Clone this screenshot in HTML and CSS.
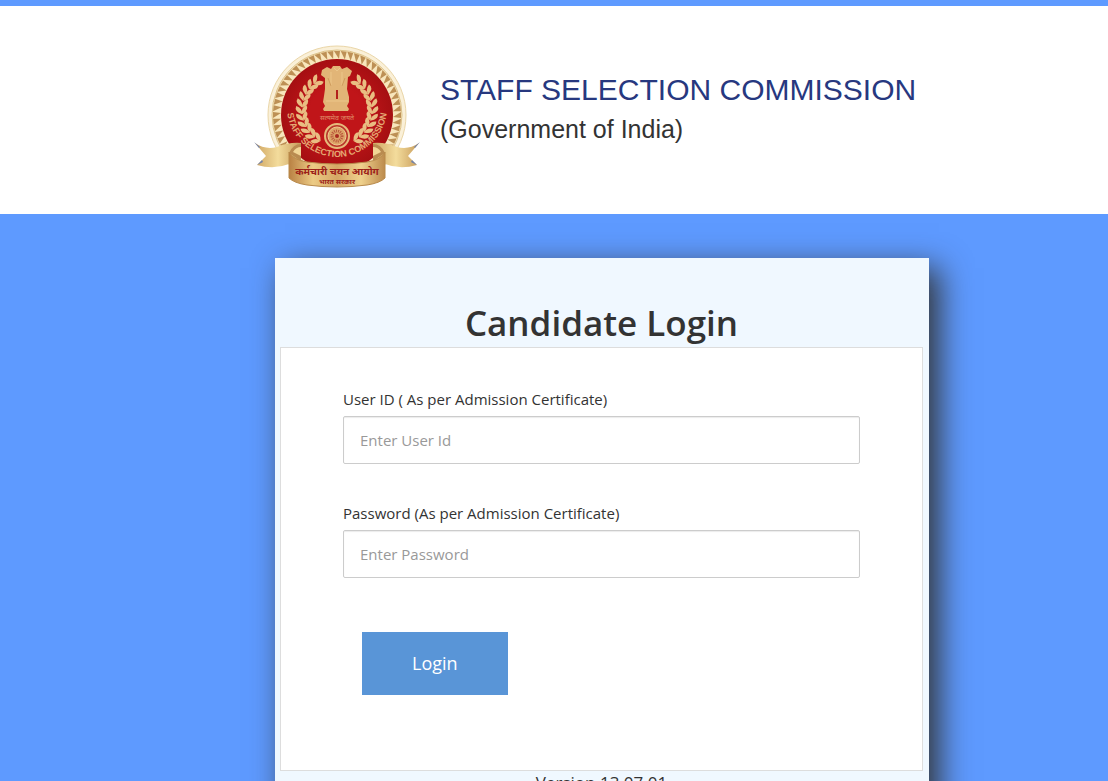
FILE: index.html
```html
<!DOCTYPE html>
<html lang="en">
<head>
  <meta charset="UTF-8" />
  <meta name="viewport" content="width=device-width, initial-scale=1" />
  <title>Staff Selection Commission | Candidate Login</title>
  <link rel="stylesheet" href="styles.css">
</head>
<body>

  <header class="site-header">
    <svg class="emblem" viewBox="0 0 200 170" role="img" aria-label="Staff Selection Commission emblem">
      <defs>
        <linearGradient id="gold" x1="0" x2="1">
          <stop offset="0" stop-color="#b98143" />
          <stop offset="0.25" stop-color="#eccb85" />
          <stop offset="0.5" stop-color="#d5a765" />
          <stop offset="0.75" stop-color="#efd18d" />
          <stop offset="1" stop-color="#bd8b4d" />
        </linearGradient>
        <linearGradient id="tail" x1="0" x2="1">
          <stop offset="0" stop-color="#cfa562" />
          <stop offset="0.5" stop-color="#f3dc9c" />
          <stop offset="1" stop-color="#c89c5a" />
        </linearGradient>
        <radialGradient id="red">
          <stop offset="0.5" stop-color="#c01519" />
          <stop offset="1" stop-color="#a50f12" />
        </radialGradient>
        <path id="motto" d="M47 77 A50 50 0 0 0 147 77" />
      </defs>

      <circle cx="97" cy="85" r="69" fill="#faf0d8" stroke="#ead6a8" />
      <circle cx="97" cy="85" r="65" fill="#f8e6bc" stroke="#dcc28a" />
      <g id="teeth" fill="#bd9055"></g>
      <circle cx="97" cy="85" r="56" fill="url(#red)" />

      <!-- lion capital -->
      <path fill="#e2b577" d="M82 40 l5 -3 4 2 2 -3 7 0 2 3 5 -2 5 4 -2 5 -2 1 -1 12 2 8 0 5 -2 4 2 3 -1 2 -24 0 -1 -2 2 -3 -2 -4 1 -6 1 -7 0 -11 -4 -3z" />
      <path fill="none" stroke="#ecc68a" stroke-width="1" d="M91 42v14M102 42v14M86 71h22M94 38l3 3 3-3" />
      <path fill="none" stroke="#cf9c5c" stroke-width="1" d="M88 48l3 8M105 48l-3 8" />
      <path stroke="#b3211c" stroke-width="2" d="M97 60v9" />
      <text class="emblem-small" x="97" y="90">सत्यमेव जयते</text>

      <g id="laurel" fill="#e9bd82"></g>

      <!-- wheel -->
      <circle cx="97" cy="106" r="12" fill="#b9362a" stroke="#e6ba7c" stroke-width="2" />
      <circle cx="97" cy="106" r="9" fill="#dda568" stroke="#f0cb91" />
      <circle cx="97" cy="106" r="5" fill="none" stroke="#b9563c" stroke-width="3" stroke-dasharray="1 1" />
      <circle cx="97" cy="106" r="2" fill="#a82a20" />

      <text class="emblem-motto"><textPath href="#motto" startOffset="50%" text-anchor="middle">STAFF SELECTION COMMISSION</textPath></text>

      <!-- ribbon -->
      <path fill="url(#tail)" d="M15 113 q10 7 22 4 q12 -5 24 -4 v17 l-12 4 q-15 6 -32 1 l9 -9z" />
      <path fill="url(#tail)" d="M179 113 q-10 7 -22 4 q-12 -5 -24 -4 v17 l12 4 q15 6 32 1 l-9 -9z" />
      <path fill="#b98b50" d="M49 123 q4 -9 12 -9 v17z M145 123 q-4 -9 -12 -9 v17z" />
      <path fill="#f1d595" d="M53 122 q3 -5 8 -5 v9z M141 122 q-3 -5 -8 -5 v9z" />
      <path fill="url(#gold)" stroke="#b88a4b" stroke-width="1" d="M49 122 q4 8 18 10 q30 4 60 0 q14 -2 18 -10 v26 q-5 5 -18 7 q-30 4 -60 0 q-13 -2 -18 -7z" />
      <path fill="#7082ac" d="M14 112l6 5-1 1zM17 135l5-5 1 2zM180 112l-6 5 1 1zM177 135l-5-5-1 2z" />
      <text class="emblem-ribbon" x="97" y="145">कर्मचारी चयन आयोग</text>
      <text class="emblem-ribbon emblem-ribbon-sub" x="97" y="154">भारत सरकार</text>
    </svg>
    <div class="brand">
      <p class="brand-name">STAFF SELECTION COMMISSION</p>
      <p class="brand-sub">(Government of India)</p>
    </div>
  </header>

  <main class="login-card">
    <h1>Candidate Login</h1>
    <form class="login-form">
      <div class="field">
        <label for="userid">User ID ( As per Admission Certificate)</label>
        <input type="text" id="userid" placeholder="Enter User Id" />
      </div>
      <div class="field">
        <label for="password">Password (As per Admission Certificate)</label>
        <input type="password" id="password" placeholder="Enter Password" />
      </div>
      <button type="submit">Login</button>
    </form>
    <p class="version">Version 13.07.01</p>
  </main>

  <script src="emblem.js"></script>
</body>
</html>
```
FILE: styles.css
```css
* {
  box-sizing: border-box;
}
body {
  margin: 0;
  background: #5e9aff;
  color: #333;
  font-family: "Open Sans", sans-serif;
}
p, h1 {
  margin: 0;
}
.site-header {
  display: flex;
  align-items: flex-start;
  border-top: 6px solid #5e9aff;
  padding: 24px 0 14px 240px;
  background: #fff;
}
.emblem {
  flex: none;
  width: 200px;
  height: 170px;
}
.emblem-motto {
  font: bold 9px "Liberation Sans", sans-serif;
  fill: #e5a873;
}
.emblem-small {
  font: 7px "Noto Sans", sans-serif;
  fill: #e08f68;
  text-anchor: middle;
}
.emblem-ribbon {
  font: bold 10px "Noto Sans", sans-serif;
  fill: #9c2219;
  text-anchor: middle;
}
.emblem-ribbon-sub {
  font-size: 7px;
}
.brand {
  padding-top: 42px;
  font-family: "Liberation Sans", Arial, sans-serif;
  white-space: nowrap;
}
.brand-name {
  font-size: 30px;
  line-height: 36px;
  color: #27387f;
}
.brand-sub {
  margin-top: 6px;
  font-size: 25px;
  line-height: 30px;
  color: #333;
}
.login-card {
  margin: 44px 179px 0 275px;
  padding: 40px 6px 20px 5px;
  background: #f0f8ff;
  box-shadow: 10px 10px 30px #333;
}
h1 {
  font-size: 35px;
  font-weight: 600;
  line-height: 49px;
  text-align: center;
}
.login-form {
  height: 424px;
  border: 1px solid #ddd;
  padding: 40px 62px;
  background: #fff;
}
.field {
  margin-bottom: 38px;
}
.field label {
  display: block;
  margin-bottom: 6px;
  font-size: 15px;
  font-weight: 400;
  line-height: 22px;
}
.field input {
  display: block;
  width: 100%;
  height: 48px;
  border: 1px solid #ccc;
  border-radius: 2px;
  padding: 0 16px;
  background: #fff;
  box-shadow: inset 0 1px 1px rgba(0, 0, 0, 0.08);
  color: #555;
  font: 15px "Open Sans", sans-serif;
}
.field input::placeholder {
  color: #999;
  opacity: 1;
}
button {
  margin: 16px 0 0 19px;
  border: none;
  padding: 0 50px 2px;
  height: 63px;
  background: #5995d7;
  color: #fff;
  font: 18px "Open Sans", sans-serif;
  cursor: pointer;
}
button:hover {
  background: #4583c6;
}
.version {
  font-size: 17px;
  line-height: 24px;
  text-align: center;
}
```
FILE: emblem.js
```js
const SVG_NS = 'http://www.w3.org/2000/svg';

function addPath(parent, d, transform) {
  const path = document.createElementNS(SVG_NS, 'path');
  path.setAttribute('d', d);
  path.setAttribute('transform', transform);
  parent.appendChild(path);
}

// Gold teeth round the rim
const teeth = document.getElementById('teeth');
for (let i = 0; i < 60; i++) {
  addPath(teeth, 'M94 21h6l-1 8z', `rotate(${i * 6} 97 85)`);
}

// Laurel branches, mirrored about the lion capital
const laurel = document.getElementById('laurel');
const leaf = 'M0 0q-1 -6 5 -9q3 5 -5 9z';
for (const side of [1, -1]) {
  for (let i = 0; i < 11; i++) {
    const angle = 118 + i * 11;
    const place = `translate(97 80) scale(${side} 1) rotate(${angle}) translate(35 0)`;
    addPath(laurel, leaf, `${place} scale(1 -1)`);
    addPath(laurel, leaf, `${place} scale(-1 -1)`);
  }
}
```
